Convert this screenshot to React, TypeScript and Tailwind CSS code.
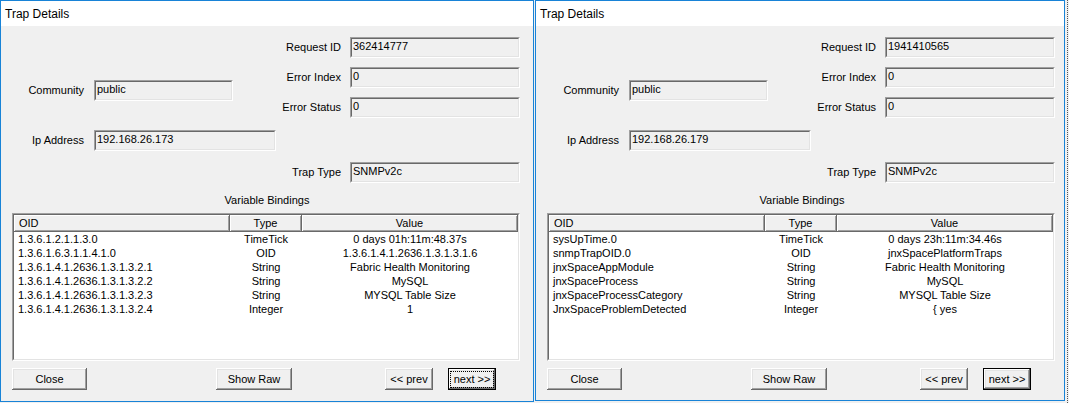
import React from 'react';

type Row = { oid: string; type: string; value: string };

const sunkenOuter = 'border border-t-[#a0a0a0] border-l-[#a0a0a0] border-r-white border-b-white';
const sunkenInner = 'border border-t-[#696969] border-l-[#696969] border-r-[#e3e3e3] border-b-[#e3e3e3]';
const raised =
  'shadow-[inset_-1px_-1px_0_#696969,inset_1px_1px_0_#ffffff,inset_-2px_-2px_0_#a0a0a0,inset_2px_2px_0_#e3e3e3]';

const Field: React.FC<{ value: string; className: string }> = ({ value, className }) => (
  <div className={`h-[21px] ${sunkenOuter} ${className}`}>
    <div className={`h-full bg-[#f0f0f0] pl-px pt-px leading-[13px] whitespace-nowrap overflow-hidden ${sunkenInner}`}>
      {value}
    </div>
  </div>
);

const Button: React.FC<{ label: string; className: string; isDefault?: boolean; focused?: boolean }> = ({
  label,
  className,
  isDefault,
  focused,
}) => (
  <div className={`h-[22px] ${isDefault ? 'border border-black' : ''} ${className}`}>
    <div className={`h-full w-full bg-[#f0f0f0] flex items-center justify-center ${raised}`}>
      {focused ? (
        <span className="border border-dotted border-black px-[3px] leading-[13px] h-[17px] flex items-center">
          {label}
        </span>
      ) : (
        <span className="leading-[13px]">{label}</span>
      )}
    </div>
  </div>
);

interface TrapWindowProps {
  requestId: string;
  ip: string;
  rows: Row[];
  focusNext?: boolean;
  narrow?: boolean;
}

const TrapWindow: React.FC<TrapWindowProps> = ({ requestId, ip, rows, focusNext, narrow }) => (
  <div
    className={`${narrow ? 'w-[530px] h-[401px]' : 'w-[534px] h-[402px]'} shrink-0 border border-[#1883d7] flex flex-col overflow-hidden`}
  >
    <div className="h-[25px] bg-white flex items-center pl-[4px] text-[12px] text-black shrink-0">Trap Details</div>
    <div className="flex-1 bg-[#f0f0f0] w-[532px] shrink-0">
      <div className="flex h-[157px]">
        <div className="w-[279px] shrink-0 pt-[54px]">
          <div className="flex items-center h-[21px]">
            <span className="w-[83px] text-right">Community</span>
            <Field className="ml-[10px] w-[139px]" value="public" />
          </div>
          <div className="flex items-center h-[21px] mt-[29px]">
            <span className="w-[83px] text-right">Ip Address</span>
            <Field className="ml-[10px] w-[182px]" value={ip} />
          </div>
        </div>
        <div className="pt-[11px] flex flex-col">
          <div className="flex items-center h-[21px]">
            <span className="w-[61px] text-right whitespace-nowrap">Request ID</span>
            <Field className="ml-[9px] w-[170px]" value={requestId} />
          </div>
          <div className="flex items-center h-[21px] mt-[9px]">
            <span className="w-[61px] text-right whitespace-nowrap">Error Index</span>
            <Field className="ml-[9px] w-[170px]" value="0" />
          </div>
          <div className="flex items-center h-[21px] mt-[9px]">
            <span className="w-[61px] text-right whitespace-nowrap">Error Status</span>
            <Field className="ml-[9px] w-[170px]" value="0" />
          </div>
          <div className="flex items-center h-[21px] mt-[44px]">
            <span className="w-[61px] text-right whitespace-nowrap">Trap Type</span>
            <Field className="ml-[9px] w-[170px]" value="SNMPv2c" />
          </div>
        </div>
      </div>

      <div className="mt-[11px] text-center leading-[13px]">Variable Bindings</div>

      <div className={`ml-[11px] mt-[6px] w-[508px] h-[148px] ${sunkenOuter}`}>
        <div className={`h-full bg-white ${sunkenInner}`}>
          <div className="flex h-[17px] leading-[13px]">
            <div className="w-[216px] pl-[5px] flex items-center bg-[#f0f0f0] border-r border-b border-[#696969] shadow-[inset_1px_1px_0_#ffffff,inset_-1px_-1px_0_#a0a0a0]">
              OID
            </div>
            <div className="w-[72px] flex items-center justify-center bg-[#f0f0f0] border-r border-b border-[#696969] shadow-[inset_1px_1px_0_#ffffff,inset_-1px_-1px_0_#a0a0a0]">
              Type
            </div>
            <div className="w-[216px] flex items-center justify-center bg-[#f0f0f0] border-r border-b border-[#696969] shadow-[inset_1px_1px_0_#ffffff,inset_-1px_-1px_0_#a0a0a0]">
              Value
            </div>
          </div>
          {rows.map((r) => (
            <div key={r.oid} className="flex h-[14px] leading-[14px] whitespace-nowrap">
              <div className="w-[216px] pl-[4px]">{r.oid}</div>
              <div className="w-[72px] text-center">{r.type}</div>
              <div className="w-[216px] text-center">{r.value}</div>
            </div>
          ))}
        </div>
      </div>

      <div className="flex mt-[7px]">
        <Button label="Close" className="ml-[11px] w-[75px]" />
        <Button label="Show Raw" className="ml-[129px] w-[76px]" />
        <Button label="<< prev" className="ml-[93px] w-[48px]" />
        <Button label="next >>" className="ml-[15px] w-[48px]" isDefault focused={focusNext} />
      </div>
    </div>
  </div>
);

const leftRows: Row[] = [
  { oid: '1.3.6.1.2.1.1.3.0', type: 'TimeTick', value: '0 days 01h:11m:48.37s' },
  { oid: '1.3.6.1.6.3.1.1.4.1.0', type: 'OID', value: '1.3.6.1.4.1.2636.1.3.1.3.1.6' },
  { oid: '1.3.6.1.4.1.2636.1.3.1.3.2.1', type: 'String', value: 'Fabric Health Monitoring' },
  { oid: '1.3.6.1.4.1.2636.1.3.1.3.2.2', type: 'String', value: 'MySQL' },
  { oid: '1.3.6.1.4.1.2636.1.3.1.3.2.3', type: 'String', value: 'MYSQL Table Size' },
  { oid: '1.3.6.1.4.1.2636.1.3.1.3.2.4', type: 'Integer', value: '1' },
];

const rightRows: Row[] = [
  { oid: 'sysUpTime.0', type: 'TimeTick', value: '0 days 23h:11m:34.46s' },
  { oid: 'snmpTrapOID.0', type: 'OID', value: 'jnxSpacePlatformTraps' },
  { oid: 'jnxSpaceAppModule', type: 'String', value: 'Fabric Health Monitoring' },
  { oid: 'jnxSpaceProcess', type: 'String', value: 'MySQL' },
  { oid: 'jnxSpaceProcessCategory', type: 'String', value: 'MYSQL Table Size' },
  { oid: 'JnxSpaceProblemDetected', type: 'Integer', value: '{ yes' },
];

export default function App() {
  return (
    <div className="w-[1069px] h-[403px] overflow-hidden bg-[#f0f0f0] flex text-[11px] text-black font-['Liberation_Sans',Arial,sans-serif]">
      <TrapWindow requestId="362414777" ip="192.168.26.173" rows={leftRows} focusNext />
      <div className="w-px shrink-0" />
      <TrapWindow requestId="1941410565" ip="192.168.26.179" rows={rightRows} narrow />
      <div className="flex-1 border-l border-dotted border-[#555] ml-[2px]" />
    </div>
  );
}
